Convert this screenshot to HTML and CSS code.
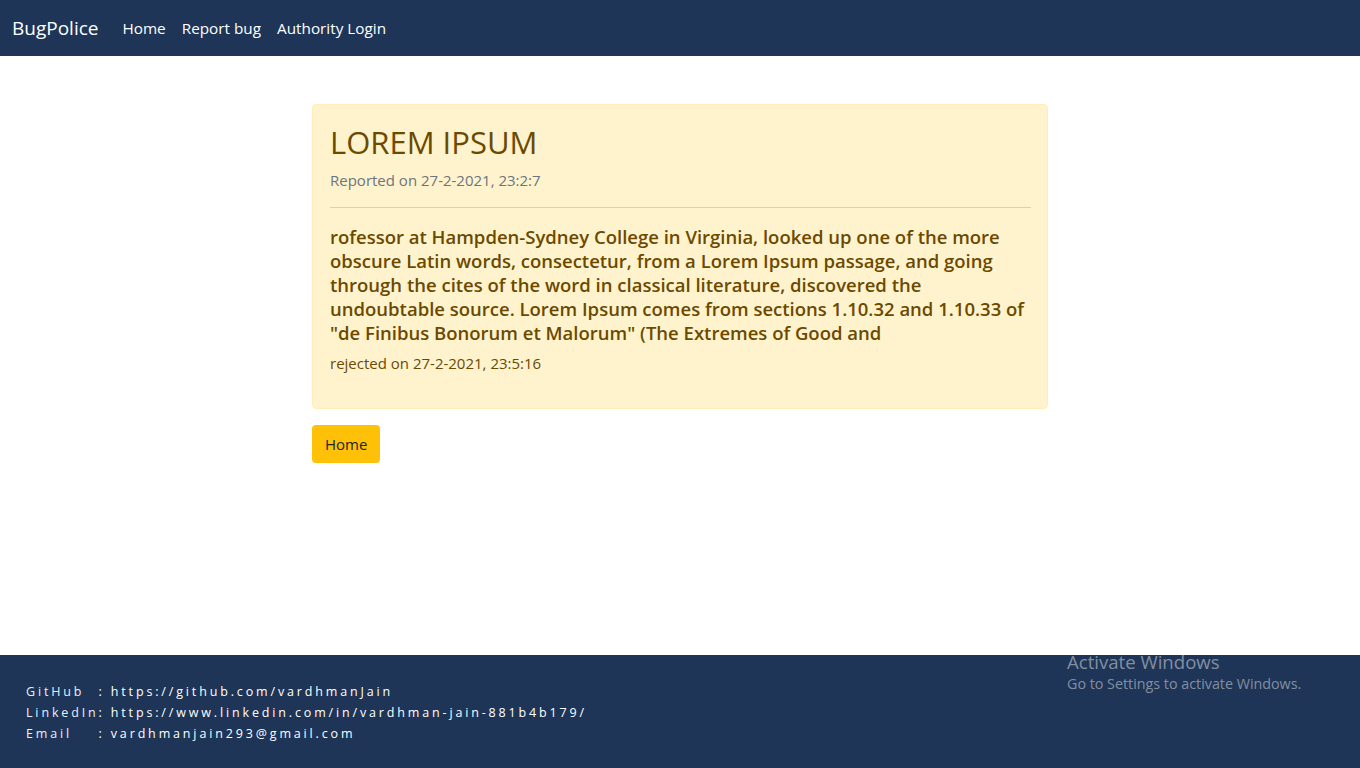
FILE: index.html
```html
<!DOCTYPE html>
<html lang="en">
<head>
<meta charset="utf-8">
<title>BugPolice</title>
<link rel="stylesheet" href="styles.css">
</head>
<body>
<div class="page">
  <nav class="navbar">
    <a class="brand" href="#">BugPolice</a>
    <a class="nav-link" href="#">Home</a>
    <a class="nav-link" href="#">Report bug</a>
    <a class="nav-link" href="#">Authority Login</a>
  </nav>
  <main class="main">
    <div class="container">
      <div class="alert">
        <h1 class="title">LOREM IPSUM</h1>
        <p class="reported">Reported on 27-2-2021, 23:2:7</p>
        <hr class="divider">
        <h5 class="desc">rofessor at Hampden-Sydney College in Virginia, looked up one of the more obscure Latin words, consectetur, from a Lorem Ipsum passage, and going through the cites of the word in classical literature, discovered the undoubtable source. Lorem Ipsum comes from sections 1.10.32 and 1.10.33 of "de Finibus Bonorum et Malorum" (The Extremes of Good and</h5>
        <p class="status">rejected on 27-2-2021, 23:5:16</p>
      </div>
      <a class="btn" href="#">Home</a>
    </div>
  </main>
  <footer class="footer">
    <div class="contacts">
      <span class="label">GitHub</span><span class="val">: https://github.com/vardhmanJain</span>
      <span class="label">LinkedIn</span><span class="val">: https://www.linkedin.com/in/vardhman-jain-881b4b179/</span>
      <span class="label">Email</span><span class="val">: vardhmanjain293@gmail.com</span>
    </div>
    <div class="watermark">
      <div class="wm-title">Activate Windows</div>
      <div class="wm-sub">Go to Settings to activate Windows.</div>
    </div>
  </footer>
</div>
</body>
</html>
```
FILE: styles.css
```css
* { box-sizing: border-box; }
html, body { margin: 0; padding: 0; }
body {
  font-family: "Open Sans", "Noto Sans", sans-serif;
  font-size: 16px;
  color: #212529;
  background: #fff;
}
.page {
  min-height: 768px;
  display: flex;
  flex-direction: column;
}
.navbar {
  height: 56px;
  background: #1e3557;
  display: flex;
  align-items: center;
  padding: 0 12px;
}
.brand {
  color: #fff;
  text-decoration: none;
  font-size: 19px;
  margin-right: 16px;
}
.nav-link {
  color: #fff;
  text-decoration: none;
  font-size: 15.3px;
  padding: 0 8px;
}
.main {
  flex: 1;
  padding-top: 48px;
}
.container {
  width: 736px;
  margin: 0 auto;
}
.alert {
  background: #fff3cd;
  border: 1px solid #ffeeba;
  border-radius: 4px;
  padding: 16px 16px 33px 17px;
  color: #856404;
}
.title {
  margin: 0;
  font-size: 31px;
  font-weight: 500;
  line-height: 42px;
  color: #6b4a00;
}
.reported {
  margin: 5px 0 0;
  font-size: 15px;
  line-height: 24px;
  color: #6c757d;
}
.divider {
  border: 0;
  border-top: 1px solid #ddd0a6;
  margin: 15px 0 17px;
}
.desc {
  margin: 0;
  font-size: 18.5px;
  font-weight: 600;
  line-height: 24px;
  color: #6b4a00;
}
.status {
  margin: 6px 0 0;
  font-size: 15px;
  line-height: 24px;
  color: #6b4a00;
}
.btn {
  display: inline-block;
  margin-top: 16px;
  background: #ffc107;
  color: #212529;
  text-decoration: none;
  font-size: 15px;
  line-height: 22px;
  padding: 8px 13px;
  border-radius: 4px;
}
.footer {
  position: relative;
  height: 113px;
  background: #1e3557;
  padding: 26px 26px 0;
}
.contacts {
  display: grid;
  grid-template-columns: auto 1fr;
  font-size: 12.5px;
  letter-spacing: 2.85px;
  line-height: 21px;
  color: #fff;
}
.label { color: #e4f0ff; padding-right: 0; }
.watermark {
  position: absolute;
  left: 1067px;
  top: -5px;
  color: rgba(255,255,255,0.45);
}
.wm-title { font-size: 18.6px; line-height: 24px; }
.wm-sub { font-size: 14.3px; line-height: 20px; }
```
